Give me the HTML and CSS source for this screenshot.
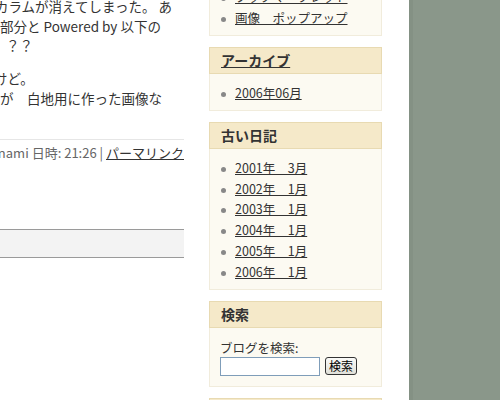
FILE: index.html
```html
<!DOCTYPE html>
<html lang="ja">
<head>
    <meta charset="UTF-8">
    <title>ブログ</title>
    <link rel="stylesheet" href="styles.css">
</head>
<body>
    <div class="page">
        <!-- Entry column -->
        <div class="main">
            <div class="entry">
                <p>
                    <span class="line cut">カラムが消えてしまった。 あ</span>
                    <span class="line">部分と Powered by 以下の</span>
                    <span class="line indent">？？</span>
                </p>
                <p>
                    <span class="line cut-small">けど。</span>
                    <span class="line">が　白地用に作った画像な</span>
                </p>
            </div>
            <div class="entry-footer"><span>投稿者: inami 日時: 21:26 | <a href="#">パーマリンク</a></span></div>
            <div class="nav-bar"></div>
        </div>

        <!-- Sidebar -->
        <div class="sidebar">
            <div class="box">
                <div class="box-head">最近のエントリー</div>
                <div class="box-body">
                    <ul>
                        <li><a href="#">ブックマークレット</a></li>
                        <li><a href="#">画像　ポップアップ</a></li>
                    </ul>
                </div>
            </div>

            <div class="box">
                <div class="box-head"><a href="#">アーカイブ</a></div>
                <div class="box-body">
                    <ul>
                        <li><a href="#">2006年06月</a></li>
                    </ul>
                </div>
            </div>

            <div class="box">
                <div class="box-head">古い日記</div>
                <div class="box-body">
                    <ul>
                        <li><a href="#">2001年　3月</a></li>
                        <li><a href="#">2002年　1月</a></li>
                        <li><a href="#">2003年　1月</a></li>
                        <li><a href="#">2004年　1月</a></li>
                        <li><a href="#">2005年　1月</a></li>
                        <li><a href="#">2006年　1月</a></li>
                    </ul>
                </div>
            </div>

            <div class="box">
                <div class="box-head">検索</div>
                <div class="box-body search-body">
                    <label for="search">ブログを検索:</label>
                    <div class="search-row">
                        <input type="text" id="search">
                        <button>検索</button>
                    </div>
                </div>
            </div>

            <div class="box">
                <div class="box-head">リンク</div>
            </div>
        </div>
    </div>
</body>
</html>
```

FILE: styles.css
```css
body {
    margin: 0;
    background-color: #8a978a;
    color: #333;
    font-family: "Noto Sans CJK JP", "Noto Sans", sans-serif;
}
.page {
    display: flex;
    width: 409px;
    height: 400px;
    overflow: hidden;
    background: #fff;
    border-right: 4px solid #849184;
}
a {
    color: #333;
}

/* entry column */
.main {
    width: 184px;
    flex: none;
    overflow: hidden;
    margin-top: -3px;
    font-size: 13.5px;
}
.entry p {
    margin: 0 0 13.5px;
    line-height: 19.5px;
    white-space: nowrap;
}
.entry p:last-child {
    margin-bottom: 0;
}
.line {
    display: block;
}
.cut {
    margin-left: -5px;
}
.cut-small {
    margin-left: -6px;
}
.indent {
    padding-left: 6px;
}
.entry-footer {
    display: flex;
    justify-content: flex-end;
    margin-top: 31px;
    padding-top: 6px;
    border-top: 1px solid #e6e6e6;
    font-size: 13px;
    line-height: 14px;
    color: #666;
    white-space: nowrap;
}
.entry-footer span {
    flex: none;
}
.nav-bar {
    margin-top: 69px;
    height: 27px;
    background: #f3f3f3;
    border-top: 1px solid #9a9a9a;
    border-bottom: 1px solid #9a9a9a;
}

/* sidebar */
.sidebar {
    width: 173px;
    flex: none;
    margin-left: 25px;
    margin-top: -48.6px;
}
.box {
    margin-bottom: 11px;
}
.box-head {
    height: 25px;
    line-height: 25px;
    padding-left: 11px;
    background: #f5e9c9;
    border: 1px solid #e8dab2;
    font-size: 14px;
    font-weight: bold;
    color: #333;
}
.box-body {
    padding: 9px 10px 6px;
    background: #fcfaf2;
    border: 1px solid #f1ecdc;
    border-top: none;
    font-size: 12.5px;
}
.box-body ul {
    margin: 0;
    padding: 0;
    list-style: none;
}
.box-body li {
    position: relative;
    padding-left: 15px;
    line-height: 20.8px;
    white-space: nowrap;
}
.box-body li::before {
    content: "";
    position: absolute;
    left: 1px;
    top: 9px;
    width: 5px;
    height: 5px;
    border-radius: 50%;
    background: #888;
}
.search-body {
    padding: 11px 10px 10px;
}
.search-body label {
    display: block;
    line-height: 18px;
}
.search-row {
    display: flex;
    align-items: flex-start;
    gap: 5px;
}
.search-row input {
    width: 96px;
    height: 15px;
    margin: 0;
    padding: 1px;
    border: 1px solid #7f9db9;
    background: #fff;
}
.search-row button {
    height: 18px;
    margin: 0;
    padding: 0 3px;
    border: 1px solid #333;
    border-radius: 3px;
    background: linear-gradient(#fafaf8, #e0e0d8);
    font-family: inherit;
    font-size: 12px;
    line-height: 14px;
    color: #000;
}
```
